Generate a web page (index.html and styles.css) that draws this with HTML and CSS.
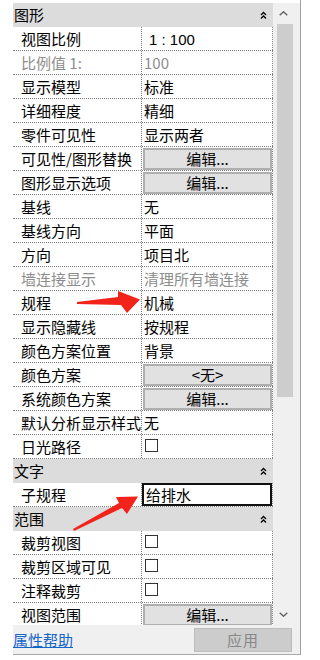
FILE: index.html
```html
<!doctype html>
<html lang="zh-CN">
	<head>
		<meta charset="utf-8">
		<title>属性</title>
		<link rel="stylesheet" href="styles.css">
	</head>
	<body>
<div class="panel">
	<div class="main">
		<div class="grid">
			<div class="group">图形<svg class="fold" width="7" height="8" viewBox="0 0 7 8"><polyline points="1,4 3.5,1.5 6,4"/><polyline points="1,7.5 3.5,5 6,7.5"/></svg></div>
			<div class="row"><div class="name">视图比例</div><div class="val"><span class="scale">1 : 100</span></div></div>
			<div class="row off"><div class="name">比例值 1:</div><div class="val">100</div></div>
			<div class="row"><div class="name">显示模型</div><div class="val">标准</div></div>
			<div class="row"><div class="name">详细程度</div><div class="val">精细</div></div>
			<div class="row"><div class="name">零件可见性</div><div class="val">显示两者</div></div>
			<div class="row"><div class="name">可见性/图形替换</div><div class="val"><span class="btn">编辑...</span></div></div>
			<div class="row"><div class="name">图形显示选项</div><div class="val"><span class="btn">编辑...</span></div></div>
			<div class="row"><div class="name">基线</div><div class="val">无</div></div>
			<div class="row"><div class="name">基线方向</div><div class="val">平面</div></div>
			<div class="row"><div class="name">方向</div><div class="val">项目北</div></div>
			<div class="row off"><div class="name">墙连接显示</div><div class="val">清理所有墙连接</div></div>
			<div class="row"><div class="name">规程</div><div class="val">机械</div></div>
			<div class="row"><div class="name">显示隐藏线</div><div class="val">按规程</div></div>
			<div class="row"><div class="name">颜色方案位置</div><div class="val">背景</div></div>
			<div class="row"><div class="name">颜色方案</div><div class="val"><span class="btn">&lt;无&gt;</span></div></div>
			<div class="row"><div class="name">系统颜色方案</div><div class="val"><span class="btn">编辑...</span></div></div>
			<div class="row"><div class="name">默认分析显示样式</div><div class="val">无</div></div>
			<div class="row"><div class="name">日光路径</div><div class="val"><span class="check"></span></div></div>
			<div class="group">文字<svg class="fold" width="7" height="8" viewBox="0 0 7 8"><polyline points="1,4 3.5,1.5 6,4"/><polyline points="1,7.5 3.5,5 6,7.5"/></svg></div>
			<div class="row"><div class="name">子规程</div><div class="val"><span class="field">给排水</span></div></div>
			<div class="group">范围<svg class="fold" width="7" height="8" viewBox="0 0 7 8"><polyline points="1,4 3.5,1.5 6,4"/><polyline points="1,7.5 3.5,5 6,7.5"/></svg></div>
			<div class="row"><div class="name">裁剪视图</div><div class="val"><span class="check"></span></div></div>
			<div class="row"><div class="name">裁剪区域可见</div><div class="val"><span class="check"></span></div></div>
			<div class="row"><div class="name">注释裁剪</div><div class="val"><span class="check"></span></div></div>
			<div class="row"><div class="name">视图范围</div><div class="val"><span class="btn">编辑...</span></div></div>
		</div>
		<div class="scroll">
			<div class="sb-btn"><svg width="9" height="5" viewBox="0 0 9 5"><polyline points="0.7,4.3 4.5,0.8 8.3,4.3"/></svg></div>
			<div class="thumb"></div>
			<div class="track"></div>
			<div class="sb-btn"><svg width="9" height="5" viewBox="0 0 9 5"><polyline points="0.7,0.7 4.5,4.2 8.3,0.7"/></svg></div>
		</div>
	</div>
	<div class="foot">
		<a class="help" href="#">属性帮助</a>
		<span class="apply">应用</span>
	</div>
</div>

<svg class="marks" width="320" height="660" viewBox="0 0 320 660">
	<polygon points="77,302 118,297 118,291 140,299.5 127,313 121,305 77,304"/>
	<polygon points="73,529 119,503 116,497 138,496.5 127,514 122,508 74,531"/>
</svg>
	</body>
</html>
```
FILE: styles.css
```css
body {
	margin: 0;
	background: #fff;
	font-family: "Noto Sans CJK SC", "Noto Sans", sans-serif;
	font-size: 15px;
	color: #000;
}

.panel {
	width: 287px;
	margin-left: 13px;
	padding-top: 3px;
	border-right: 1px solid #a0a0a0;
	border-bottom: 1px solid #a8a8a8;
}

.main {
	display: flex;
	height: 622px;
	overflow: hidden;
}

.grid {
	width: 260px;
	flex: none;
}

.group {
	display: flex;
	align-items: center;
	justify-content: space-between;
	height: 24px;
	padding-left: 1px;
	padding-right: 6px;
	background: #dcdcdc;
	line-height: 24px;
}

.fold polyline {
	fill: none;
	stroke: #000;
	stroke-width: 1.3;
}

.row {
	display: flex;
	height: 24px;
	box-sizing: border-box;
	border-bottom: 1px dotted #808080;
	line-height: 23px;
}

.name {
	width: 129px;
	box-sizing: border-box;
	padding-left: 8px;
	border-right: 1px dotted #808080;
	white-space: nowrap;
	overflow: hidden;
}

.val {
	width: 131px;
	box-sizing: border-box;
	padding-left: 2px;
	border-right: 1px dotted #808080;
	white-space: nowrap;
	overflow: hidden;
}

.scale {
	padding-left: 5px;
	font-family: "Liberation Sans", sans-serif;
	font-size: 15px;
}

.off {
	color: #8d8d8d;
}

.btn {
	display: block;
	height: 22px;
	margin: 1px 0 0 -1px;
	box-sizing: border-box;
	border: 2px solid #afafaf;
	background: #e1e1e1;
	text-align: center;
	line-height: 18px;
}

.check {
	display: block;
	width: 11px;
	height: 11px;
	margin: 4px 0 0 1px;
	border: 1px solid #333;
	background: #fff;
}

.field {
	display: block;
	height: 23px;
	margin-left: -2px;
	padding-left: 2px;
	box-sizing: border-box;
	border: 2px solid #111;
	line-height: 19px;
}

.scroll {
	display: flex;
	flex-direction: column;
	width: 27px;
	flex: none;
	background: #f0f0f0;
}

.sb-btn {
	display: flex;
	align-items: center;
	height: 21px;
	padding-left: 6px;
	flex: none;
}

.sb-btn polyline {
	fill: none;
	stroke: #606060;
	stroke-width: 1.4;
}

.thumb {
	width: 16px;
	height: 373px;
	margin-left: 4px;
	background: #cdcdcd;
	flex: none;
}

.track {
	flex: 1;
}

.foot {
	display: flex;
	align-items: center;
	justify-content: space-between;
	height: 29px;
	padding-right: 8px;
	background: #f0f0f0;
}

.help {
	color: #1565c8;
	text-decoration: underline;
	line-height: 20px;
}

.apply {
	width: 98px;
	height: 24px;
	box-sizing: border-box;
	border: 1px solid #bdbdbd;
	background: #cccccc;
	color: #878787;
	text-align: center;
	line-height: 22px;
	letter-spacing: 1px;
}

.marks {
	position: absolute;
	top: 0;
	left: 0;
	pointer-events: none;
}

.marks polygon {
	fill: #f2231a;
}
```
